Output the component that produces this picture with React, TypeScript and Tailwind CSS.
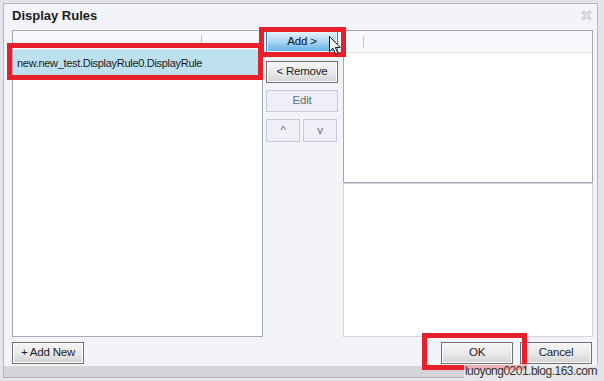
import React from "react";

function Btn({
  children,
  className = "",
}: {
  children: React.ReactNode;
  className?: string;
}) {
  return (
    <div
      className={
        "flex h-[22px] items-center justify-center border border-[#707070] bg-gradient-to-b from-[#f6f5f6] via-[#ebeaeb] to-[#d3d2d4] text-[11.5px] tracking-[-0.2px] text-[#1a1a1a] shadow-[inset_0_0_0_1px_#fbfbfb] " +
        className
      }
    >
      {children}
    </div>
  );
}

function DisabledBtn({
  children,
  className = "",
}: {
  children: React.ReactNode;
  className?: string;
}) {
  return (
    <div
      className={
        "flex items-center justify-center border border-[#c9cad8] bg-[#eeeff7] text-[11.5px] tracking-[-0.2px] text-[#6a6a74] " +
        className
      }
    >
      {children}
    </div>
  );
}

function CloseIcon() {
  return (
    <svg width="11" height="11" viewBox="0 0 11 11">
      <path
        d="M1 2.5 L2.5 1 L5.5 4 L8.5 1 L10 2.5 L7 5.5 L10 8.5 L8.5 10 L5.5 7 L2.5 10 L1 8.5 L4 5.5 Z"
        fill="#f2f2f2"
        stroke="#a2a2a2"
        strokeWidth="0.9"
      />
    </svg>
  );
}

function Cursor() {
  return (
    <svg width="13" height="20" viewBox="0 0 13 20">
      <path
        d="M0.5 0.5 L0.5 15.5 L4 12.2 L6.6 18.3 L8.8 17.3 L6.3 11.4 L11.2 11.4 Z"
        fill="#ffffff"
        stroke="#111111"
        strokeWidth="1"
        strokeLinejoin="round"
      />
    </svg>
  );
}

export default function App() {
  return (
    <div className="relative h-[381px] w-[604px] overflow-hidden bg-[#e4e4ea] font-['Liberation_Sans',sans-serif]">
      <div className="ml-[3px] mt-[3px] flex h-[375px] w-[595px] flex-col border border-[#b4b8c4] bg-[#f3f4fa]">
        {/* title */}
        <div className="flex h-[26px] items-start justify-between pl-[8px] pr-[5px] pt-[5px]">
          <span className="text-[13px] font-bold leading-[14px] text-[#1b1b1b]">
            Display Rules
          </span>
          <span className="mt-[1px]">
            <CloseIcon />
          </span>
        </div>

        {/* main */}
        <div className="flex h-[307px] pl-[8px]">
          <div className="flex w-[251px] flex-col border border-[#a4aab6] bg-white">
            <div className="flex h-[19px] items-center border-b border-[#e6e7ef] bg-[#f7f8fc]">
              <div className="h-[11px] w-[189px] border-r border-[#c4c6d0]" />
            </div>
            <div className="flex h-[26px] items-center bg-[#bde0ee] pl-[4px] text-[11px] tracking-[-0.3px] text-[#1a1a1a]">
              new.new_test.DisplayRule0.DisplayRule
            </div>
          </div>

          <div className="ml-[3px] flex w-[72px] flex-col pt-[1px]">
            <div className="flex h-[22px] items-center justify-center border border-[#3d7db3] bg-gradient-to-b from-[#e2f2fb] via-[#a9d5f1] to-[#5aaee3] text-[11.5px] tracking-[-0.2px] text-[#111] shadow-[inset_0_0_0_1px_#e8f4fc]">
              Add &gt;
            </div>
            <Btn className="mt-[8px]">&lt; Remove</Btn>
            <DisabledBtn className="mt-[7px] h-[22px]">Edit</DisabledBtn>
            <div className="mt-[7px] flex gap-[3px]">
              <DisabledBtn className="h-[23px] w-[34px]">^</DisabledBtn>
              <DisabledBtn className="h-[23px] w-[34px]">v</DisabledBtn>
            </div>
          </div>

          <div className="ml-[5px] flex w-[250px] flex-col">
            <div className="flex h-[153px] flex-col border border-[#a0a8b6] bg-white">
              <div className="flex h-[22px] items-center border-b border-[#e4e6ee] bg-[#f7f8fc]">
                <div className="h-[12px] w-[20px] border-r border-[#c4c6d0]" />
              </div>
            </div>
            <div className="h-[154px] border border-[#d3d4dc] bg-white" />
          </div>
        </div>

        {/* buttons */}
        <div className="flex h-[29px] items-start justify-between pl-[8px] pr-[5px] pt-[5px]">
          <Btn className="w-[72px]">+ Add New</Btn>
          <div className="flex gap-[7px]">
            <Btn className="w-[72px]">OK</Btn>
            <Btn className="w-[72px]">Cancel</Btn>
          </div>
        </div>

        <div className="h-[11px] bg-[#d5d5d9]" />
      </div>

      {/* annotation overlays */}
      <div className="absolute left-[7px] top-[43px] h-[37px] w-[256px] border-[5px] border-[#e8202a]" />
      <div className="absolute left-[259px] top-[27px] h-[30px] w-[87px] border-[5px] border-[#e8202a]" />
      <div className="absolute left-[422px] top-[333px] h-[37px] w-[105px] border-[5px] border-[#e8202a]" />
      <div className="absolute left-[329px] top-[36px]">
        <Cursor />
      </div>

      <div className="absolute bottom-[2px] right-[6px] bg-[#eeeeee]/70 px-[1px] text-[12px] leading-[15px] tracking-[-0.5px] text-[#333]">
        luoyong0201.blog.163.com
      </div>
    </div>
  );
}
